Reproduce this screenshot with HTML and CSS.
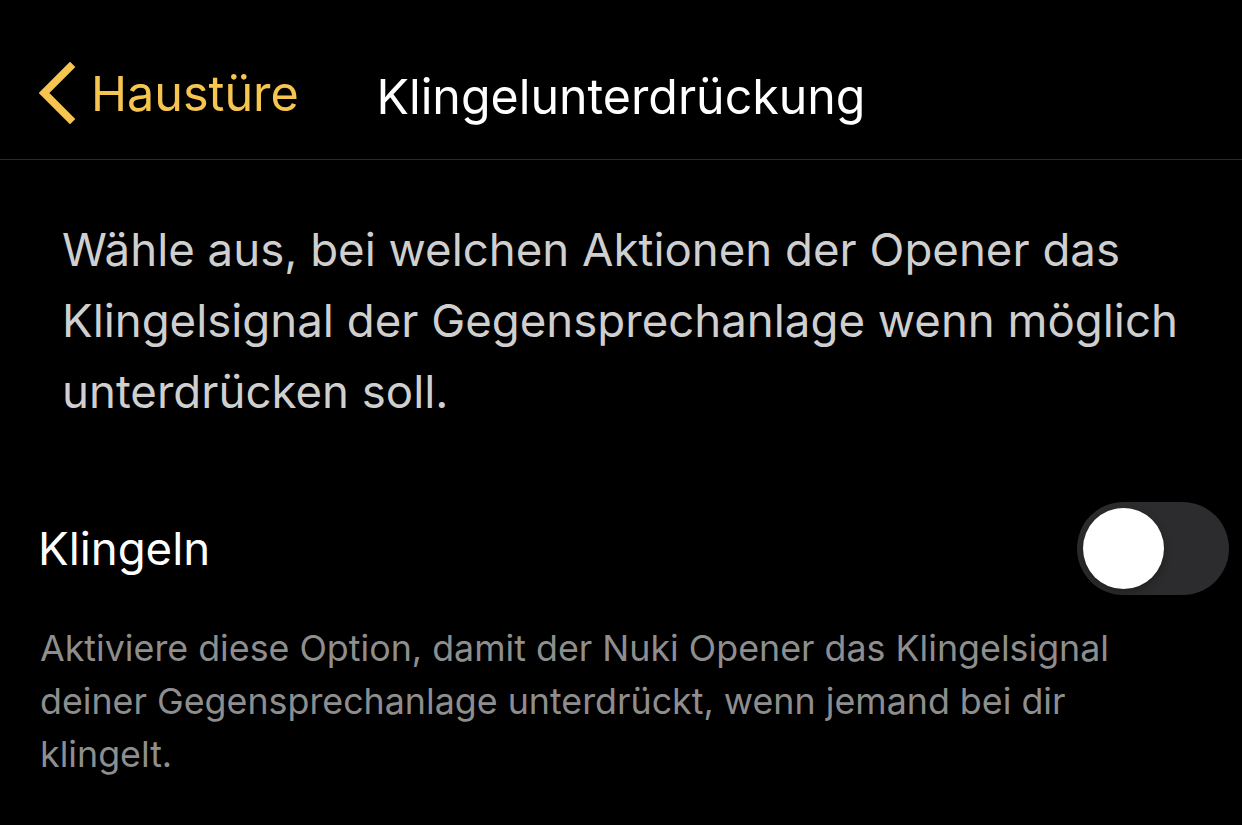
FILE: index.html
```html
<!DOCTYPE html>
<html lang="de">
<head>
    <meta charset="UTF-8">
    <meta name="viewport" content="width=device-width, initial-scale=1.0">
    <title>Klingelunterdrückung</title>
    <link rel="stylesheet" href="styles.css">
</head>
<body>
    <div class="nav">
        <a class="back" href="#">
            <svg class="chevron" width="40" height="62" viewBox="0 0 40 62">
                <polyline points="33,5 7,31 33,57" fill="none" stroke="#f5c54f" stroke-width="7.5" stroke-linecap="square" stroke-linejoin="miter"/>
            </svg>
            <span>Haustüre</span>
        </a>
        <h1 class="title">Klingelunterdrückung</h1>
    </div>

    <p class="intro">Wähle aus, bei welchen Aktionen der Opener das Klingelsignal der Gegensprechanlage wenn möglich unterdrücken soll.</p>

    <div class="row">
        <span class="row-label">Klingeln</span>
        <div class="toggle"><div class="knob"></div></div>
    </div>

    <p class="footer">Aktiviere diese Option, damit der Nuki Opener das Klingelsignal deiner Gegensprechanlage unterdrückt, wenn jemand bei dir klingelt.</p>
</body>
</html>
```

FILE: styles.css
```css
* {
    margin: 0;
    padding: 0;
    box-sizing: border-box;
}

body {
    background-color: #000;
    font-family: Inter, "Noto Sans", sans-serif;
    width: 1242px;
    height: 825px;
    overflow: hidden;
}

.nav {
    position: relative;
    height: 160px;
    border-bottom: 1px solid #2a2a2c;
    display: flex;
    align-items: center;
    justify-content: center;
}

.back {
    position: absolute;
    left: 37px;
    top: 62px;
    display: flex;
    align-items: center;
    gap: 14px;
    color: #f5c54f;
    text-decoration: none;
    font-size: 48.5px;
}

.chevron {
    display: block;
}

.title {
    color: #fff;
    font-size: 48.3px;
    font-weight: 400;
    padding-top: 34px;
}

.intro {
    color: #cfcfcf;
    font-size: 45.6px;
    line-height: 71px;
    padding: 54px 40px 0 62px;
}

.row {
    display: flex;
    align-items: center;
    justify-content: space-between;
    padding: 75px 13px 0 38px;
}

.row-label {
    color: #fff;
    font-size: 45.6px;
}

.toggle {
    width: 152px;
    height: 93px;
    border-radius: 47px;
    background-color: #2c2c2e;
    padding: 6px;
}

.knob {
    width: 81px;
    height: 81px;
    border-radius: 50%;
    background-color: #fff;
    box-shadow: 0 3px 8px rgba(0, 0, 0, 0.3);
}

.footer {
    color: #8e8e8e;
    font-size: 35.8px;
    line-height: 53px;
    padding: 27px 60px 0 40px;
}
```
